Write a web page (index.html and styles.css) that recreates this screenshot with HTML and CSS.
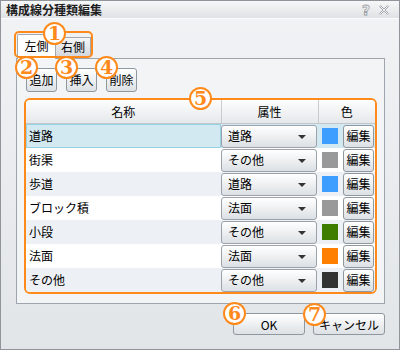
FILE: index.html
```html
<!DOCTYPE html>
<html lang="ja">

<head>
    <meta http-equiv="Content-Type" content="text/html; charset=UTF-8">
    <meta name="viewport" content="width=device-width, initial-scale=1.0">
    <title>構成線分種類編集</title>
    <link rel="stylesheet" href="styles.css">
</head>

<body>
    <div class="window">
        <div class="titlebar">
            <span class="title">構成線分種類編集</span>
            <span class="tb-icons">
                <span class="tb-help">?</span>
                <svg class="tb-close" width="10" height="10" viewBox="0 0 10 10">
                    <path d="M0.5 1.5 L1.5 0.5 L5 4 L8.5 0.5 L9.5 1.5 L6 5 L9.5 8.5 L8.5 9.5 L5 6 L1.5 9.5 L0.5 8.5 L4 5 Z"
                        fill="#f4f5f6" stroke="#9a9ea3" stroke-width="0.9" stroke-linejoin="round" />
                </svg>
            </span>
        </div>

        <div class="client">
            <div class="tabs">
                <div class="tab active">左側</div>
                <div class="tab">右側</div>
            </div>

            <div class="panel">
                <div class="toolbar">
                    <button class="btn small">追加</button>
                    <button class="btn small">挿入</button>
                    <button class="btn small">削除</button>
                </div>

                <div class="grid-wrap">
                    <table class="grid">
                        <colgroup>
                            <col class="c-name">
                            <col class="c-attr">
                            <col class="c-color">
                        </colgroup>
                        <thead>
                            <tr>
                                <th>名称</th>
                                <th>属性</th>
                                <th>色</th>
                            </tr>
                        </thead>
                        <tbody>
                            <tr class="selected">
                                <td class="name">道路</td>
                                <td><div class="combo">道路<span class="arrow"></span></div></td>
                                <td><div class="color-cell"><span class="swatch blue"></span><button class="btn edit">編集</button></div></td>
                            </tr>
                            <tr>
                                <td class="name">街渠</td>
                                <td><div class="combo">その他<span class="arrow"></span></div></td>
                                <td><div class="color-cell"><span class="swatch gray"></span><button class="btn edit">編集</button></div></td>
                            </tr>
                            <tr class="alt">
                                <td class="name">歩道</td>
                                <td><div class="combo">道路<span class="arrow"></span></div></td>
                                <td><div class="color-cell"><span class="swatch blue"></span><button class="btn edit">編集</button></div></td>
                            </tr>
                            <tr>
                                <td class="name">ブロック積</td>
                                <td><div class="combo">法面<span class="arrow"></span></div></td>
                                <td><div class="color-cell"><span class="swatch gray"></span><button class="btn edit">編集</button></div></td>
                            </tr>
                            <tr class="alt">
                                <td class="name">小段</td>
                                <td><div class="combo">その他<span class="arrow"></span></div></td>
                                <td><div class="color-cell"><span class="swatch green"></span><button class="btn edit">編集</button></div></td>
                            </tr>
                            <tr>
                                <td class="name">法面</td>
                                <td><div class="combo">法面<span class="arrow"></span></div></td>
                                <td><div class="color-cell"><span class="swatch orange"></span><button class="btn edit">編集</button></div></td>
                            </tr>
                            <tr class="alt">
                                <td class="name">その他</td>
                                <td><div class="combo">その他<span class="arrow"></span></div></td>
                                <td><div class="color-cell"><span class="swatch dark"></span><button class="btn edit">編集</button></div></td>
                            </tr>
                        </tbody>
                    </table>
                </div>
            </div>

            <div class="footer">
                <button class="btn wide">OK</button>
                <button class="btn wide">キャンセル</button>
            </div>
        </div>

        <!-- callout marks -->
        <div class="mark-tabs"></div>
        <span class="badge b1">1</span>
        <span class="badge b2">2</span>
        <span class="badge b3">3</span>
        <span class="badge b4">4</span>
        <span class="badge b5">5</span>
        <span class="badge b6">6</span>
        <span class="badge b7">7</span>
    </div>
</body>

</html>
```

FILE: styles.css
```css
body {
    margin: 0;
    font-family: "Noto Sans CJK JP", "Noto Sans", sans-serif;
    font-size: 12px;
    color: #000;
}

.window {
    position: relative;
    width: 398px;
    height: 348px;
    border: 1px solid #8f959b;
    background: linear-gradient(to bottom, #f1f3f5, #e2e5e8);
}

.titlebar {
    display: flex;
    align-items: center;
    justify-content: space-between;
    height: 17px;
    padding: 0 10px 0 5px;
    background: linear-gradient(to bottom, #f6f7f8, #dfe2e5);
    border-bottom: 1px solid #fbfcfc;
}

.title {
    font-weight: bold;
    font-size: 12px;
    line-height: 17px;
    color: #1e1e1e;
}

.tb-icons {
    display: flex;
    align-items: center;
    gap: 9px;
}

.tb-help {
    font-family: "DejaVu Sans", sans-serif;
    font-weight: bold;
    font-size: 14px;
    line-height: 14px;
    color: #f3f4f5;
    -webkit-text-stroke: 0.8px #9a9ea3;
}

.client {
    padding: 14px 14px 0 15px;
}

.tabs {
    display: flex;
    align-items: flex-end;
    height: 25px;
    padding-left: 1px;
}

.tab {
    box-sizing: border-box;
    height: 20px;
    width: 35px;
    line-height: 18px;
    text-align: center;
    border: 1px solid #a2a8ae;
    border-left: none;
    background: linear-gradient(to bottom, #f5f6f7, #d4d8dc);
    margin-bottom: 1px;
}

.tab.active {
    height: 25px;
    width: 39px;
    line-height: 22px;
    border-left: 1px solid #a2a8ae;
    border-bottom: none;
    border-radius: 2px 2px 0 0;
    background: #ffffff;
    margin-bottom: -1px;
    position: relative;
    z-index: 1;
}

.panel {
    box-sizing: border-box;
    height: 246px;
    border: 1px solid #9fa5ac;
    background: #f2f4f6;
    padding: 9px 9px;
}

.toolbar {
    display: flex;
    gap: 9px;
}

.btn {
    box-sizing: border-box;
    font-family: "Noto Sans CJK JP", "Noto Sans", sans-serif;
    font-size: 12px;
    color: #000;
    border: 1px solid #8f979f;
    border-radius: 3px;
    background: linear-gradient(to bottom, #ffffff, #dde1e5);
    padding: 0;
    cursor: pointer;
}

.btn.small {
    width: 31px;
    height: 24px;
    line-height: 20px;
}

.grid-wrap {
    width: 349px;
    margin: 6px 0 0 -2px;
    border: 2px solid #ff8a1c;
    border-radius: 6px;
    overflow: hidden;
    background: #fff;
}

.grid {
    width: 349px;
    border-collapse: collapse;
    table-layout: fixed;
}

.c-name {
    width: 195px;
}

.c-attr {
    width: 97px;
}

.c-color {
    width: 57px;
}

.grid th {
    height: 23px;
    padding: 0;
    font-weight: normal;
    line-height: 22px;
    background: linear-gradient(to bottom, #fdfdfd, #e5e8eb);
    border-right: 1px solid #c7ccd1;
    border-bottom: 1px solid #c2c7cc;
}

.grid th:last-child {
    border-right: none;
}

.grid td {
    height: 24px;
    padding: 0;
    line-height: 22px;
}

.grid tr.alt td {
    background: #edf1f5;
}

.grid td.name {
    padding-left: 3px;
}

.grid tr.selected td {
    background: #d3e9f1;
}

.grid tr.selected td.name {
    box-shadow: inset 0 0 0 1px #97d2e4;
}

.combo {
    position: relative;
    box-sizing: border-box;
    height: 23px;
    margin: 0 1px 0 0;
    padding-left: 6px;
    line-height: 20px;
    border: 1px solid #9ba2a9;
    border-radius: 3px;
    background: linear-gradient(to bottom, #ffffff, #dce0e4);
}

.arrow {
    position: absolute;
    right: 10px;
    top: 9px;
    border-left: 4px solid transparent;
    border-right: 4px solid transparent;
    border-top: 4px solid #333;
}

.color-cell {
    display: flex;
    align-items: center;
    gap: 5px;
    padding-left: 4px;
}

.swatch {
    width: 16px;
    height: 16px;
}

.swatch.blue {
    background: #3d9eff;
}

.swatch.gray {
    background: #999999;
}

.swatch.green {
    background: #3f7d00;
}

.swatch.orange {
    background: #ff8000;
}

.swatch.dark {
    background: #333333;
}

.btn.edit {
    width: 31px;
    height: 23px;
    line-height: 20px;
}

.footer {
    display: flex;
    justify-content: flex-end;
    gap: 8px;
    margin-top: 9px;
}

.btn.wide {
    width: 72px;
    height: 22px;
    line-height: 19px;
}

/* orange callouts drawn over the dialog */
.mark-tabs {
    position: absolute;
    left: 13px;
    top: 30px;
    width: 75px;
    height: 23px;
    border: 2px solid #ff8a1c;
    border-radius: 5px;
    z-index: 2;
}

.badge {
    position: absolute;
    box-sizing: border-box;
    width: 23px;
    height: 23px;
    border: 2px solid #ff8a1c;
    border-radius: 50%;
    background: #fff;
    color: #ff8a1c;
    font-family: "DejaVu Serif", serif;
    font-weight: bold;
    font-size: 19px;
    line-height: 19px;
    text-align: center;
    z-index: 3;
}

.b1 {
    left: 42px;
    top: 21px;
}

.b2 {
    left: 14px;
    top: 55px;
}

.b3 {
    left: 54px;
    top: 55px;
}

.b4 {
    left: 94px;
    top: 55px;
}

.b5 {
    left: 188px;
    top: 86px;
}

.b6 {
    left: 222px;
    top: 301px;
}

.b7 {
    left: 302px;
    top: 302px;
}
```
